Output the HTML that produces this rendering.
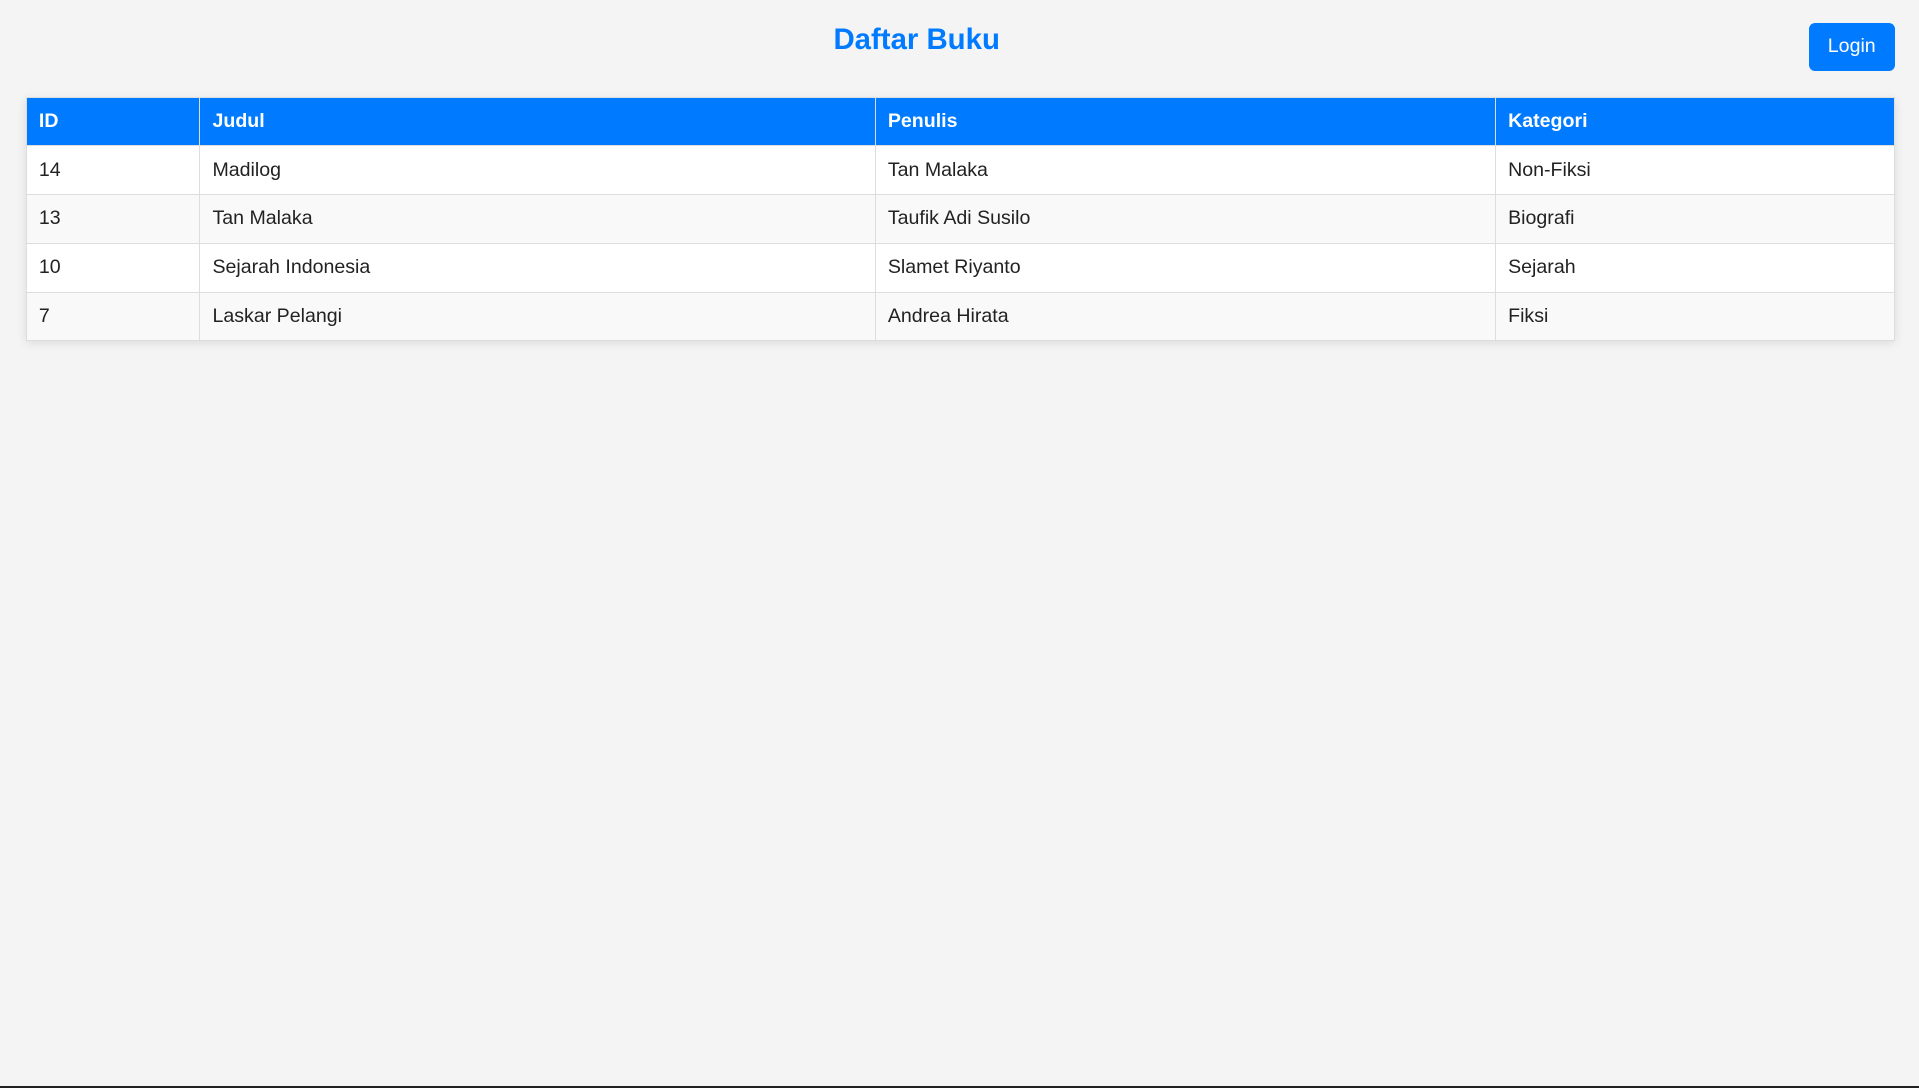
<!DOCTYPE html>
<html><head><meta charset="utf-8"><style>
html{zoom:1.2239}
body{margin:0;background:#f4f4f4;font-family:"Liberation Sans",Arial,sans-serif;width:1568px;height:889px;position:relative;overflow:hidden}
h2{margin:0;position:absolute;top:19px;left:0;width:1498px;text-align:center;color:#007bff;font-size:24px;font-weight:bold;line-height:28px}
.btn{position:absolute;left:1478px;top:19px;width:70px;height:39px;background:#007bff;color:#fff;border-radius:5px;font-size:16px;line-height:39px;text-align:center}
table{position:absolute;left:21px;top:79px;width:1527px;border-collapse:collapse;background:#fff;box-shadow:0 2px 8px rgba(0,0,0,.1)}
th,td{border:1px solid #ddd;padding:0 10px;height:39px;text-align:left;font-size:16px;color:#222}
th{background:#007bff;color:#fff;font-weight:bold;border-color:#ddd}
tr:nth-child(odd) td{background:#f9f9f9}
.bl{position:absolute;left:0;right:0;top:887px;height:2px;background:#222}
</style></head><body>
<h2>Daftar Buku</h2>
<div class="btn">Login</div>
<table>
<tr><th style="width:121px">ID</th><th style="width:531px">Judul</th><th style="width:486px">Penulis</th><th>Kategori</th></tr>
<tr><td>14</td><td>Madilog</td><td>Tan Malaka</td><td>Non-Fiksi</td></tr>
<tr><td>13</td><td>Tan Malaka</td><td>Taufik Adi Susilo</td><td>Biografi</td></tr>
<tr><td>10</td><td>Sejarah Indonesia</td><td>Slamet Riyanto</td><td>Sejarah</td></tr>
<tr><td>7</td><td>Laskar Pelangi</td><td>Andrea Hirata</td><td>Fiksi</td></tr>
</table>
<div class="bl"></div>
</body></html>
